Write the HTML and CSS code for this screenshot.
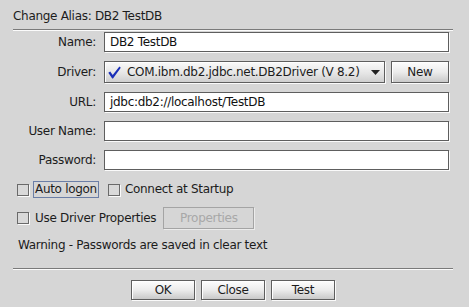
FILE: index.html
```html
<!DOCTYPE html>
<html>
<head>
<meta charset="utf-8">
<link rel="stylesheet" href="styles.css">
</head>
<body>
<div class="dialog">
  <div class="title">Change Alias: DB2 TestDB</div>
  <div class="sep"></div>
  <div class="form">
    <label class="lbl">Name:</label>
    <div class="field">DB2 TestDB</div>
    <label class="lbl">Driver:</label>
    <div class="driver-row">
      <div class="combo">
        <svg class="check" width="13" height="13" viewBox="0 0 13 13"><path d="M0.3 6.8 L2.2 5.6 L4.7 8.9 L11.4 0.6 L12.8 1.7 L5 12.6 L4.2 12.6 Z" fill="#1a2fb8"/></svg>
        <span class="combo-text">COM.ibm.db2.jdbc.net.DB2Driver (V 8.2)</span>
        <svg class="arrow" width="9" height="5" viewBox="0 0 9 5"><path d="M0 0 L9 0 L4.5 5 Z" fill="#222"/></svg>
      </div>
      <div class="btn btn-new">New</div>
    </div>
    <label class="lbl">URL:</label>
    <div class="field">jdbc:db2://localhost/TestDB</div>
    <label class="lbl">User Name:</label>
    <div class="field"></div>
    <label class="lbl">Password:</label>
    <div class="field"></div>
  </div>
  <div class="checks">
    <div class="check-item"><span class="box"></span><span class="focus">Auto logon</span></div>
    <div class="check-item second"><span class="box"></span><span class="cb-text">Connect at Startup</span></div>
  </div>
  <div class="props-row">
    <div class="check-item"><span class="box"></span><span class="cb-text2">Use Driver Properties</span></div>
    <div class="btn btn-disabled">Properties</div>
  </div>
  <div class="warning">Warning - Passwords are saved in clear text</div>
  <div class="sep sep-bottom"></div>
  <div class="buttons">
    <div class="btn btn-act">OK</div>
    <div class="btn btn-act">Close</div>
    <div class="btn btn-act">Test</div>
  </div>
</div>
</body>
</html>
```
FILE: styles.css
```css
* { box-sizing: border-box; }
html, body { margin: 0; padding: 0; background: #d6d6d6; }
.dialog {
  width: 469px;
  height: 307px;
  background: #d6d6d6;
  font-family: "DejaVu Sans", sans-serif;
  font-size: 12px;
  letter-spacing: -0.3px;
  color: #1c1c1c;
  overflow: hidden;
}
.title {
  padding: 9px 0 0 13px;
  line-height: 15px;
  height: 24px;
}
.sep {
  margin: 5px 0 0 13px;
  width: 440px;
  height: 2px;
  border-top: 1px solid #7a7a7a;
  border-bottom: 1px solid #fbfbfb;
}
.form {
  display: grid;
  grid-template-columns: 96px 345px;
  grid-template-rows: 20px 22px 20px 20px 20px;
  column-gap: 8px;
  row-gap: 9px;
  margin-top: 1px;
}
.lbl {
  text-align: right;
  align-self: center;
  line-height: 15px;
}
.field {
  background: #fff;
  border: 1px solid #5e5e5e;
  box-shadow: 1px 1px 0 #fafafa;
  padding-left: 5px;
  line-height: 18px;
  color: #111;
}
.driver-row {
  display: flex;
  gap: 6px;
}
.combo {
  width: 281px;
  height: 22px;
  display: flex;
  align-items: center;
  border: 1px solid #5e5e5e;
  box-shadow: 1px 1px 0 #fafafa, inset 1px 1px 0 #fff;
  background: linear-gradient(to bottom, #fafafa, #e6e6e6 55%, #cfcfcf);
  padding: 0 4px 0 3px;
}
.check { flex: none; }
.combo-text { margin-left: 6px; flex: 1; white-space: nowrap; }
.arrow { flex: none; margin-top: 1px; }
.btn {
  display: flex;
  align-items: center;
  justify-content: center;
  border: 1px solid #5e5e5e;
  box-shadow: 1px 1px 0 #fafafa, inset 1px 1px 0 #fff;
  background: linear-gradient(to bottom, #fdfdfd, #ececec 50%, #c9c9c9);
}
.btn-new { width: 58px; height: 22px; }
.checks {
  display: flex;
  align-items: center;
  margin-top: 11px;
  padding-left: 17px;
  height: 17px;
}
.check-item { display: flex; align-items: center; }
.box {
  width: 12px;
  height: 12px;
  border: 1px solid #6a6a6a;
  box-shadow: 1px 1px 0 #fafafa;
  background: #d9d9d9;
  flex: none;
}
.focus {
  margin-left: 4px;
  border: 1px solid #6b7ea6;
  padding: 0 1px;
  line-height: 15px;
}
.second { margin-left: 9px; }
.cb-text { margin-left: 5px; line-height: 15px; }
.cb-text2 { margin-left: 6px; line-height: 15px; }
.props-row {
  display: flex;
  align-items: center;
  padding-left: 17px;
  margin-top: 9px;
  height: 22px;
}
.btn-disabled {
  margin-left: 7px;
  width: 91px;
  height: 22px;
  background: #d6d6d6;
  border: 1px solid #a4a4a4;
  box-shadow: 1px 1px 0 #ececec;
  color: #a8a8a8;
}
.warning {
  padding-left: 18px;
  margin-top: 9px;
  line-height: 15px;
}
.sep-bottom { margin-top: 15px; }
.buttons {
  display: flex;
  gap: 6px;
  padding-left: 131px;
  margin-top: 10px;
}
.btn-act { width: 64px; height: 20px; }
```
